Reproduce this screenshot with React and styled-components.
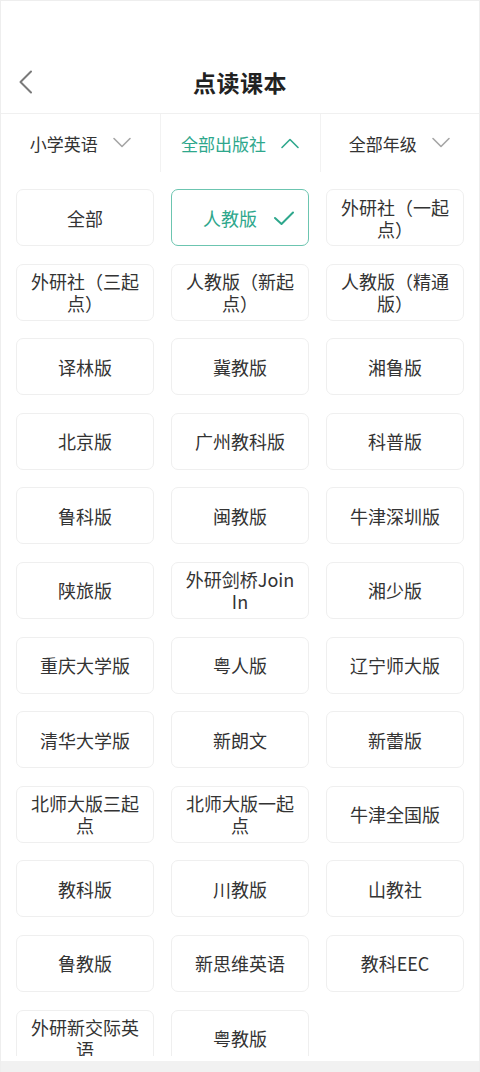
import styled, { createGlobalStyle } from "styled-components";

const GlobalStyle = createGlobalStyle`
  html, body {
    margin: 0;
    padding: 0;
    background: #ffffff;
  }
  body {
    font-family: "Noto Sans CJK SC", "Noto Sans", sans-serif;
    color: #333333;
  }
  * {
    box-sizing: border-box;
  }
`;

const TEAL = "#2ea78c";

const tabs = [
  { label: "小学英语", active: false },
  { label: "全部出版社", active: true },
  { label: "全部年级", active: false },
];

const publishers = [
  "全部",
  "人教版",
  "外研社（一起点）",
  "外研社（三起点）",
  "人教版（新起点）",
  "人教版（精通版）",
  "译林版",
  "冀教版",
  "湘鲁版",
  "北京版",
  "广州教科版",
  "科普版",
  "鲁科版",
  "闽教版",
  "牛津深圳版",
  "陕旅版",
  "外研剑桥Join In",
  "湘少版",
  "重庆大学版",
  "粤人版",
  "辽宁师大版",
  "清华大学版",
  "新朗文",
  "新蕾版",
  "北师大版三起点",
  "北师大版一起点",
  "牛津全国版",
  "教科版",
  "川教版",
  "山教社",
  "鲁教版",
  "新思维英语",
  "教科EEC",
  "外研新交际英语",
  "粤教版",
];

const Chevron = ({ up, color }) => (
  <svg width="20" height="12" viewBox="0 0 20 12" fill="none">
    <path
      d={up ? "M2 10.5 L10 2.5 L18 10.5" : "M2 1.5 L10 9.5 L18 1.5"}
      stroke={color}
      strokeWidth="1.6"
      strokeLinecap="round"
      strokeLinejoin="round"
    />
  </svg>
);

const App = () => (
  <>
    <GlobalStyle />
    <Page>
      <StatusBar />
      <Header>
        <BackButton aria-label="返回">
          <svg width="16" height="24" viewBox="0 0 16 24" fill="none">
            <path
              d="M13 1.5 L2.5 12 L13 22.5"
              stroke="#7a7a7a"
              strokeWidth="2"
              strokeLinecap="round"
              strokeLinejoin="round"
            />
          </svg>
        </BackButton>
        <Title>点读课本</Title>
      </Header>
      <TabBar>
        {tabs.map((tab) => (
          <Tab key={tab.label} $active={tab.active}>
            <span>{tab.label}</span>
            <Chevron up={tab.active} color={tab.active ? TEAL : "#a5a5a5"} />
          </Tab>
        ))}
      </TabBar>
      <Scroll>
        <Grid>
          {publishers.map((name, i) => (
            <Card key={name} $selected={i === 1}>
              <CardText>{name}</CardText>
              {i === 1 && (
                <Check width="22" height="16" viewBox="0 0 22 16" fill="none">
                  <path
                    d="M2 8 L8.5 14 L20 2.5"
                    stroke={TEAL}
                    strokeWidth="2"
                    strokeLinecap="round"
                    strokeLinejoin="round"
                  />
                </Check>
              )}
            </Card>
          ))}
        </Grid>
      </Scroll>
      <BottomBar />
    </Page>
  </>
);

export default App;

const Page = styled.div`
  width: 480px;
  height: 1072px;
  display: flex;
  flex-direction: column;
  overflow: hidden;
  background: #ffffff;
  border-left: 1px solid #eeeeee;
  border-right: 1px solid #eeeeee;
  border-top: 1px solid #eeeeee;
`;

const StatusBar = styled.div`
  height: 49px;
  flex-shrink: 0;
`;

const Header = styled.div`
  position: relative;
  height: 64px;
  flex-shrink: 0;
  display: flex;
  align-items: center;
  justify-content: center;
  border-bottom: 1px solid #f0f0f0;
`;

const BackButton = styled.button`
  position: absolute;
  left: 17px;
  top: 50%;
  transform: translateY(-50%);
  border: none;
  background: none;
  padding: 0;
  display: flex;
  align-items: center;
`;

const Title = styled.h1`
  margin: 0;
  font-size: 23px;
  font-weight: 700;
  color: #222222;
  letter-spacing: 0.5px;
`;

const TabBar = styled.div`
  height: 58px;
  flex-shrink: 0;
  display: grid;
  grid-template-columns: repeat(3, 1fr);
`;

const Tab = styled.div`
  display: flex;
  align-items: center;
  justify-content: center;
  gap: 14px;
  font-size: 17px;
  color: ${(p) => (p.$active ? TEAL : "#333333")};
  border-left: 1px solid #f2f2f2;

  &:first-child {
    border-left: none;
  }
`;

const Scroll = styled.div`
  flex: 1;
  overflow: hidden;
  padding: 17px 15px 0 15px;
  margin-bottom: 5px;
`;

const Grid = styled.div`
  display: grid;
  grid-template-columns: repeat(3, 1fr);
  column-gap: 17px;
  row-gap: 17.6px;
`;

const Card = styled.div`
  position: relative;
  height: 57px;
  display: flex;
  align-items: center;
  justify-content: center;
  padding: ${(p) => (p.$selected ? "0 30px 0 10px" : "0 10px")};
  border-radius: 7px;
  border: 1px solid ${(p) => (p.$selected ? "#6cc5b0" : "#efefef")};
  color: ${(p) => (p.$selected ? TEAL : "#333333")};
`;

const CardText = styled.span`
  font-size: 18px;
  line-height: 22px;
  text-align: center;
  word-break: break-all;
`;

const Check = styled.svg`
  position: absolute;
  right: 13px;
  top: 50%;
  transform: translateY(-50%);
`;

const BottomBar = styled.div`
  height: 11px;
  flex-shrink: 0;
  background: #f1f1f1;
`;
